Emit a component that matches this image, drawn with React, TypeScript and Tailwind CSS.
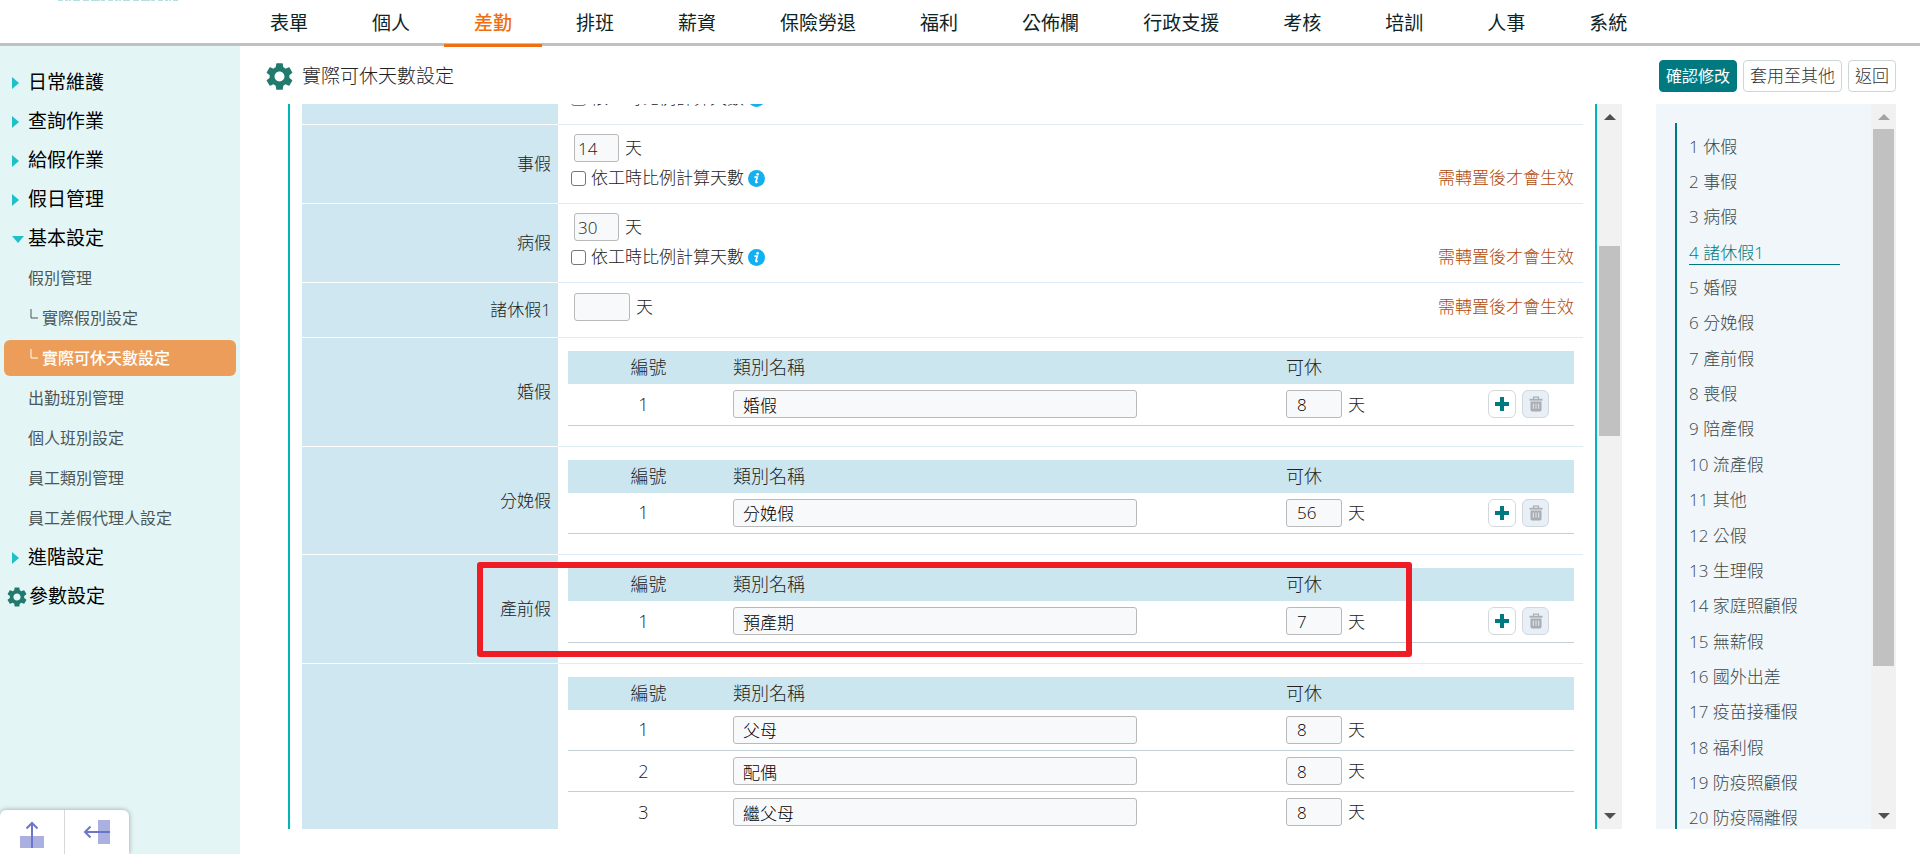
import React from 'react';
import { MdSettings } from 'react-icons/md';

const FONT = "font-['Open_Sans','Noto_Sans_CJK_TC',sans-serif]";

const tabs = ['表單', '個人', '差勤', '排班', '薪資', '保險勞退', '福利', '公佈欄', '行政支援', '考核', '培訓', '人事', '系統'];

const mainMenu = ['日常維護', '查詢作業', '給假作業', '假日管理'];

const subMenu = [
  { label: '假別管理' },
  { label: '實際假別設定', nested: true },
  { label: '實際可休天數設定', nested: true, active: true },
  { label: '出勤班別管理' },
  { label: '個人班別設定' },
  { label: '員工類別管理' },
  { label: '員工差假代理人設定' },
];

const leaveTypes = [
  '休假', '事假', '病假', '諸休假1', '婚假', '分娩假', '產前假', '喪假', '陪產假', '流產假',
  '其他', '公假', '生理假', '家庭照顧假', '無薪假', '國外出差', '疫苗接種假', '福利假', '防疫照顧假', '防疫隔離假',
];

type Item = { name: string; days: number };

function Caret({ open }: { open?: boolean }) {
  return (
    <svg viewBox="0 0 12 12" className="w-3 h-3 shrink-0 fill-[#1fc0c8]">
      {open ? <path d="M0 3h12L6 10z" /> : <path d="M0 0l7 6-7 6z" />}
    </svg>
  );
}

function InfoIcon() {
  return (
    <svg viewBox="0 0 18 18" className="w-[17px] h-[17px] shrink-0">
      <circle cx="9" cy="9" r="9" fill="#12b0f0" />
      <circle cx="10.2" cy="4.6" r="1.4" fill="#fff" />
      <path d="M6.8 7.6h3l-1.5 5c-.1.9.8.9 2 0" fill="none" stroke="#fff" strokeWidth="1.8" />
    </svg>
  );
}

function TrashIcon() {
  return (
    <svg viewBox="0 0 14 16" className="w-[14px] h-4">
      <path d="M4.5 3V1.200h5V3" fill="none" stroke="#a9aeb3" strokeWidth="1.2" />
      <path d="M0.5 2.800h13v1.800h-13z" fill="#a9aeb3" />
      <path d="M1.500 5.400h11V14a1.400 1.400 0 0 1-1.400 1.400H2.900A1.400 1.400 0 0 1 1.500 14z" fill="#a9aeb3" />
      <path d="M4.400 7.400v5.400M7 7.400v5.400M9.600 7.400v5.400" stroke="#d9e0e6" strokeWidth="1.200" />
    </svg>
  );
}

function ScrollBar({ thumb, dimUp }: { thumb: string; dimUp?: boolean }) {
  return (
    <div className="relative w-[25px] shrink-0 bg-[#f1f1f1] flex flex-col justify-between items-center py-[10px]">
      <svg viewBox="0 0 12 6" className={dimUp ? 'w-3 h-[6px] fill-[#a3a3a3]' : 'w-3 h-[6px] fill-[#505050]'}>
        <path d="M0 6l6-6 6 6z" />
      </svg>
      <div className={`absolute inset-x-[2px] bg-[#c1c1c1] ${thumb}`} />
      <svg viewBox="0 0 12 6" className="w-3 h-[6px] fill-[#505050]">
        <path d="M0 0l6 6 6-6z" />
      </svg>
    </div>
  );
}

function Header() {
  return (
    <header className="h-[46px] shrink-0 border-b-[3px] border-[#c1c1c1] flex">
      <div className="w-60 shrink-0 pl-[58px]">
        <svg viewBox="0 0 120 1" className="w-[120px] h-px">
          <path d="M0 .5h120" stroke="#b5dfe0" strokeDasharray="5 2 3 1 2 2 7 3 6 2 9 1 4 3" />
        </svg>
      </div>
      <nav className="flex gap-1">
        {tabs.map((tab) => (
          <a
            key={tab}
            href="#"
            className={
              tab === '差勤'
                ? 'h-[47px] px-[30px] pt-[9px] text-[19px] leading-7 font-medium text-[#f06f10] border-b-[3px] border-[#f06f10]'
                : 'h-[43px] px-[30px] pt-[9px] text-[19px] leading-7 text-[#0c2426]'
            }
          >
            {tab}
          </a>
        ))}
      </nav>
    </header>
  );
}

function MenuLink({ label, open }: { label: string; open?: boolean }) {
  return (
    <a href="#" className="h-[39px] pl-3 flex items-center gap-1 text-[19px] text-black">
      <Caret open={open} />
      {label}
    </a>
  );
}

function Sidebar() {
  return (
    <aside className="relative w-60 shrink-0 bg-[#e4f5f5] pt-[17px]">
      <nav className="flex flex-col">
        {mainMenu.map((label) => (
          <MenuLink key={label} label={label} />
        ))}
        <MenuLink label="基本設定" open />
        {subMenu.map((item) => (
          <a
            key={item.label}
            href="#"
            className={
              item.active
                ? 'h-9 mx-1 my-[2px] pl-6 rounded-md flex items-center gap-1 text-base font-medium bg-[#ed9d5a] text-white'
                : 'h-10 pl-7 flex items-center gap-1 text-base text-[#4b5759]'
            }
          >
            {item.nested && (
              <svg viewBox="0 0 8 10" className="ml-[2px] mb-2 w-2 h-[10px] fill-none stroke-current">
                <path d="M1 0v9h7" />
              </svg>
            )}
            {item.label}
          </a>
        ))}
        <MenuLink label="進階設定" />
        <a href="#" className="h-[39px] pl-[5px] flex items-center text-[19px] text-black">
          <MdSettings className="w-6 h-6 text-[#217a6c]" />
          參數設定
        </a>
      </nav>

      <div className="absolute left-0 bottom-0 w-[129px] h-11 flex bg-white rounded-t-md shadow-[0_0_5px_rgba(0,0,0,0.35)]">
        <button aria-label="收合上方" className="flex-1 flex justify-center items-center pt-[5px] border-r border-[#d8d8d8]">
          <svg viewBox="0 0 26 28" className="w-[26px] h-7">
            <path d="M1 15h24v12H1z" fill="#aab0e0" />
            <path d="M13 27V2M7.500 7.500L13 2l5.500 5.500" fill="none" stroke="#6c75c9" strokeWidth="2" />
          </svg>
        </button>
        <button aria-label="收合左側" className="flex-1 flex justify-center items-center">
          <svg viewBox="0 0 28 26" className="w-7 h-[26px]">
            <path d="M15 1h12v24H15z" fill="#aab0e0" />
            <path d="M27 13H2M7.500 7.500L2 13l5.500 5.500" fill="none" stroke="#6c75c9" strokeWidth="2" />
          </svg>
        </button>
      </div>
    </aside>
  );
}

function Row({ label, children, marked }: { label: string; children: React.ReactNode; marked?: boolean }) {
  return (
    <section className="relative flex">
      <div className="w-64 shrink-0 pr-[7px] flex items-center justify-end bg-[#cee7f0] border-b border-white text-[17px] font-light text-[#222]">
        {label}
      </div>
      <div className="flex-1 min-w-0 border-b border-[#deedf5]">{children}</div>
      {marked && <div className="absolute left-[175px] right-[171px] inset-y-[7px] border-[6px] border-[#ee1c24] rounded-[3px]" />}
    </section>
  );
}

function Notice() {
  return <span className="ml-auto pr-[9px] text-[#b0490a]">需轉置後才會生效</span>;
}

function RatioCheck({ id }: { id: string }) {
  return (
    <>
      <input
        id={id}
        type="checkbox"
        className="appearance-none w-[15px] h-[15px] rounded-[3px] border border-[#767676] bg-white"
      />
      <label htmlFor={id} className="ml-[5px] mr-1">依工時比例計算天數</label>
      <InfoIcon />
    </>
  );
}

function DaysRow({ label, days }: { label: string; days?: number }) {
  return (
    <Row label={label}>
      <div className={`pl-4 text-[17px] font-light text-[#222] ${days ? 'pt-[9px] h-[78px]' : 'pt-[10px] h-[54px]'}`}>
        <div className="h-7 flex items-center gap-[6px]">
          <input
            aria-label={label}
            defaultValue={days}
            className={`h-7 px-[3px] rounded-[3px] border border-[#b9b9b9] bg-[#f8f9fb] ${days ? 'w-[45px]' : 'w-14'}`}
          />
          天
          {!days && <Notice />}
        </div>
        {days && (
          <div className="-ml-[3px] h-8 flex items-center">
            <RatioCheck id={`ratio-${label}`} />
            <Notice />
          </div>
        )}
      </div>
    </Row>
  );
}

function TableRow({ label, items, marked, editable = true }: { label: string; items: Item[]; marked?: boolean; editable?: boolean }) {
  return (
    <Row label={label} marked={marked}>
      <div className="pl-[10px] pr-[9px] pt-[13px] pb-5">
        <table className="w-full table-fixed text-[18px] font-light text-[#222]">
          <thead>
            <tr className="h-[33px] bg-[#cce6ef] text-left">
              <th className="w-[165px] pr-1 text-center font-light">編號</th>
              <th className="font-light">類別名稱</th>
              <th className="w-[202px] font-light">可休</th>
              <th className="w-[86px]" aria-label="操作" />
            </tr>
          </thead>
          <tbody>
            {items.map((item, i) => (
              <tr key={item.name} className="h-[41px] border-b border-[#c5d1d8]">
                <td className="pr-[14px] text-center">{i + 1}</td>
                <td>
                  <input
                    aria-label={`${label}類別名稱`}
                    defaultValue={item.name}
                    className="block w-[73%] h-7 px-[9px] rounded-[3px] border border-[#b9b9b9] bg-[#f8f9fb] text-[17px] text-black"
                  />
                </td>
                <td>
                  <div className="flex items-center gap-[6px] text-[17px]">
                    <input
                      aria-label={`${label}可休天數`}
                      defaultValue={item.days}
                      className="w-14 h-7 px-[10px] rounded-[3px] border border-[#b9b9b9] bg-[#f8f9fb] text-[17px] text-black"
                    />
                    天
                  </div>
                </td>
                <td>
                  {editable && (
                    <div className="flex gap-[6px]">
                      <button aria-label="新增" className="w-7 h-7 rounded-md border border-[#d3d9db] bg-white flex items-center justify-center">
                        <svg viewBox="0 0 14 14" className="w-[14px] h-[14px] fill-none stroke-[#007a80] stroke-4">
                          <path d="M7 0v14M0 7h14" />
                        </svg>
                      </button>
                      <button aria-label="刪除" className="w-[27px] h-7 rounded-md border border-[#ced8dd] bg-[#e8eff6] flex items-center justify-center">
                        <TrashIcon />
                      </button>
                    </div>
                  )}
                </td>
              </tr>
            ))}
          </tbody>
        </table>
      </div>
    </Row>
  );
}

function SettingsPanel() {
  return (
    <div className="flex-1 min-w-0 flex border-l-2 border-[#00b5b5]">
      <div className="flex-1 min-w-0 overflow-hidden pl-3 pr-3 border-r-2 border-[#00b5c0]">
        {/* list is scrolled part way into the first row */}
        <div className="-mt-[58px]">
          <Row label="">
            <div className="h-[78px] pt-9 pl-[13px] text-[17px] font-light text-[#222]">
              <div className="h-8 flex items-center">
                <RatioCheck id="ratio-annual" />
              </div>
            </div>
          </Row>
          <DaysRow label="事假" days={14} />
          <DaysRow label="病假" days={30} />
          <DaysRow label="諸休假1" />
          <TableRow label="婚假" items={[{ name: '婚假', days: 8 }]} />
          <TableRow label="分娩假" items={[{ name: '分娩假', days: 56 }]} />
          <TableRow label="產前假" items={[{ name: '預產期', days: 7 }]} marked />
          <TableRow
            label=""
            editable={false}
            items={[
              { name: '父母', days: 8 },
              { name: '配偶', days: 8 },
              { name: '繼父母', days: 8 },
            ]}
          />
        </div>
      </div>
      <ScrollBar thumb="top-[142px] h-[190px]" />
    </div>
  );
}

function LeaveIndex() {
  return (
    <aside className="w-60 shrink-0 flex bg-[#f0f6f9]">
      <div className="flex-1 min-w-0 overflow-hidden pt-[19px] pl-[19px]">
        <ul className="border-l-2 border-[#007a80] pl-3 pt-[7px] h-[714px] grid auto-rows-fr text-[17px] font-light text-[#3b4749]">
          {leaveTypes.map((name, i) => (
            <li key={name} className="flex items-center">
              <a
                href="#"
                className={
                  i === 3
                    ? 'block w-[151px] h-[22px] leading-5 text-[#007a80] border-b border-[#007a80]'
                    : 'block h-[22px] leading-5'
                }
              >
                {i + 1} {name}
              </a>
            </li>
          ))}
        </ul>
      </div>
      <ScrollBar thumb="top-[25px] h-[537px]" dimUp />
    </aside>
  );
}

export default function App() {
  return (
    <div className={`h-screen flex flex-col overflow-hidden bg-white ${FONT}`}>
      <Header />
      <div className="flex-1 min-h-0 flex">
        <Sidebar />
        <main className="flex-1 min-w-0 flex flex-col pr-6 pb-[25px]">
          <div className="h-[58px] shrink-0 pt-[2px] pl-[23px] flex items-center gap-[6px]">
            <MdSettings className="w-[33px] h-[33px] text-[#217a6c]" />
            <h1 className="text-[19px] font-light text-[#222]">實際可休天數設定</h1>
            <button className="ml-auto h-8 px-[6px] rounded border border-[#007a80] bg-[#007a80] text-base text-white">確認修改</button>
            <button className="h-8 px-[6px] rounded border border-[#cfd6d8] text-[17px] font-light text-[#333]">套用至其他</button>
            <button className="h-8 px-[6px] rounded border border-[#cfd6d8] text-[17px] font-light text-[#333]">返回</button>
          </div>
          <div className="flex-1 min-h-0 flex gap-[34px] pl-12">
            <SettingsPanel />
            <LeaveIndex />
          </div>
        </main>
      </div>
    </div>
  );
}
